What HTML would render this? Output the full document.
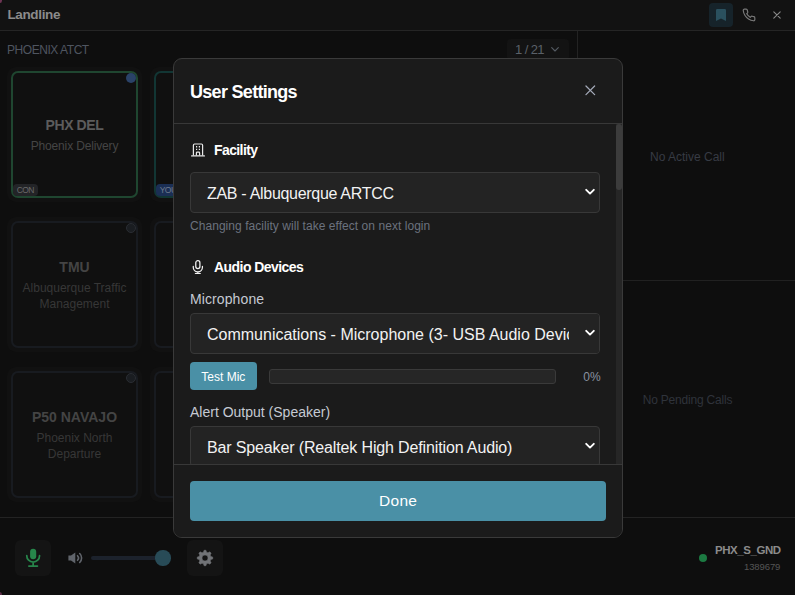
<!DOCTYPE html>
<html lang="en">
<head>
<meta charset="utf-8">
<title>Landline</title>
<style>
*{box-sizing:border-box;margin:0;padding:0}
html,body{width:795px;height:595px;overflow:hidden;background:#0e0e0e}
body{position:relative;font-family:"Liberation Sans","DejaVu Sans",sans-serif;color:#fff}
.abs{position:absolute}
.t{position:absolute;white-space:nowrap;line-height:1}
.b{font-weight:bold}
/* app chrome */
#hdr{left:0;top:0;width:795px;height:31px;background:#121212;border-bottom:1px solid #252525}
#rightp{left:577px;top:31px;width:1px;height:487px;background:#232323}
#rdiv{left:578px;top:280px;width:217px;height:1px;background:#212121}
#ftr{left:0;top:517px;width:795px;height:78px;background:#0e0e0e;border-top:1px solid #232323}
.wrap{position:absolute;width:135px;height:135px;border-radius:9px;background:#111}
.card{position:absolute;left:4px;top:4px;width:127px;height:127px;border-radius:7px;border:2px solid #181b20;background:#101010}
.ct{position:absolute;left:0;width:123px;text-align:center;white-space:nowrap;line-height:1}
.dot{position:absolute;width:10px;height:10px;border-radius:50%}
.badge{position:absolute;left:0;bottom:0;height:12px;border-radius:4px;font-size:8.500px;line-height:12px;padding:0 4px 0 3.800px;letter-spacing:-0.600px}
.ibtn{position:absolute;width:36px;height:36px;border-radius:6px;background:#141414}
/* modal */
#modal{left:173px;top:58px;width:450px;height:480px;border-radius:9px;background:#1b1b1b;border:1px solid #3a3a3a;overflow:hidden}
.sel{position:absolute;left:16px;width:410px;height:41px;border-radius:4px;background:#232323;border:1px solid #383838;overflow:hidden}
.sel .t{left:16px;top:13px;font-size:16px;color:#f2f2f2}
#s1{letter-spacing:-0.3px}#s3{letter-spacing:-0.14px}
.chev{position:absolute;left:393.750px;top:15.150px;width:10px;height:8px}
</style>
</head>
<body>
<!-- header -->
<div class="abs" style="left:-2px;top:-2px;width:4px;height:5px;border-radius:50%;background:#6e3554;z-index:5"></div>
<div class="abs" style="left:-2px;top:592px;width:4px;height:5px;border-radius:50%;background:#5a2c46;z-index:5"></div>
<div id="hdr" class="abs"></div>
<div id="title" class="t b" style="left:7.400px;top:8.200px;font-size:13.500px;letter-spacing:-0.350px;color:#8b8b8b">Landline</div>
<div class="abs" style="left:709px;top:3px;width:24px;height:24px;border-radius:4px;background:#16232a"></div>
<svg class="abs" style="left:716px;top:9px" width="10" height="12" viewBox="0 0 10 12"><path d="M0 1.2Q0 0 1.2 0H8.8Q10 0 10 1.2V12L5 9.500L0 12Z" fill="#2a505e"/></svg>
<svg class="abs" style="left:742px;top:8px" width="14" height="14" viewBox="0 0 24 24" fill="none" stroke="#7a7a7a" stroke-width="2" stroke-linecap="round" stroke-linejoin="round"><path d="M22 16.92v3a2 2 0 0 1-2.18 2 19.79 19.79 0 0 1-8.63-3.07 19.5 19.5 0 0 1-6-6 19.79 19.79 0 0 1-3.07-8.67A2 2 0 0 1 4.11 2h3a2 2 0 0 1 2 1.72 12.84 12.84 0 0 0 .7 2.81 2 2 0 0 1-.45 2.11L8.09 9.91a16 16 0 0 0 6 6l1.27-1.27a2 2 0 0 1 2.11-.45 12.84 12.84 0 0 0 2.81.7A2 2 0 0 1 22 16.92z"/></svg>
<svg class="abs" style="left:773px;top:11px" width="8" height="8" viewBox="0 0 8 8" stroke="#8a8a8a" stroke-width="1.1" stroke-linecap="round"><path d="M0.8 0.8L7.2 7.2M7.2 0.8L0.8 7.2"/></svg>

<!-- left panel -->
<div id="fac" class="t" style="left:7px;top:44px;font-size:12px;letter-spacing:-0.45px;color:#4f5560">PHOENIX ATCT</div>
<div class="abs" style="left:507px;top:39px;width:62px;height:22px;border-radius:4px;background:#131313"></div>
<div id="pg" class="t" style="left:515px;top:43px;font-size:13px;letter-spacing:-0.6px;color:#5a6068">1 / 21</div>
<svg class="abs" style="left:551px;top:47px" width="8" height="5" viewBox="0 0 8 5" fill="none" stroke="#555b63" stroke-width="1.100" stroke-linecap="round" stroke-linejoin="round"><path d="M0.700 0.700L4 4L7.300 0.700"/></svg>

<!-- cards -->
<div class="wrap" style="left:7px;top:67px"><div class="card" style="border-color:#1f4630">
  <div class="dot" style="right:0;top:0;background:#2a4268"></div>
  <div id="c1a" class="ct b" style="top:45px;font-size:14px;letter-spacing:-0.4px;color:#5c5c5c">PHX DEL</div>
  <div id="c1b" class="ct" style="top:67px;font-size:12px;letter-spacing:-0.15px;color:#454545">Phoenix Delivery</div>
  <div class="badge" style="background:#232427;color:#6a6a6a">CON</div>
</div></div>
<div class="wrap" style="left:150px;top:67px"><div class="card" style="border-color:#123634">
  <div class="badge" style="background:#1b2f55;color:#6f7a8c">YOU</div>
</div></div>
<div class="wrap" style="left:7px;top:217px"><div class="card">
  <div class="dot" style="right:0;top:0;background:#1a1d21;border:1px solid #2a2d33"></div>
  <div id="c2a" class="ct b" style="top:37px;font-size:14px;color:#444">TMU</div>
  <div id="c2b" class="ct" style="top:59px;font-size:12px;color:#373737">Albuquerque Traffic</div>
  <div id="c2c" class="ct" style="top:75px;font-size:12px;color:#373737">Management</div>
</div></div>
<div class="wrap" style="left:150px;top:217px"><div class="card"></div></div>
<div class="wrap" style="left:7px;top:367px"><div class="card">
  <div class="dot" style="right:0;top:0;background:#1a1d21;border:1px solid #2a2d33"></div>
  <div id="c3a" class="ct b" style="top:37px;font-size:14px;color:#444">P50 NAVAJO</div>
  <div id="c3b" class="ct" style="top:59px;font-size:12px;color:#373737">Phoenix North</div>
  <div id="c3c" class="ct" style="top:75px;font-size:12px;color:#373737">Departure</div>
</div></div>
<div class="wrap" style="left:150px;top:367px"><div class="card"></div></div>

<!-- right panel -->
<div id="rightp" class="abs"></div>
<div id="rdiv" class="abs"></div>
<div id="nac" class="t" style="left:650px;top:151px;font-size:12px;color:#373b44">No Active Call</div>
<div id="npc" class="t" style="left:642.700px;top:394px;font-size:12px;letter-spacing:-0.2px;color:#2f333b">No Pending Calls</div>

<!-- footer -->
<div id="ftr" class="abs"></div>
<div class="ibtn" style="left:15px;top:540px"></div>
<svg class="abs" style="left:24px;top:548px" width="18" height="20" viewBox="0 0 18 20"><rect x="6.100" y="0.800" width="6.100" height="10.500" rx="3.050" fill="#27864b"/><path d="M2.750 7.700a6.400 6.400 0 0 0 12.800 0M9.150 14.100v3.600M4.900 18h8.500" fill="none" stroke="#27864b" stroke-width="1.750" stroke-linecap="round"/></svg>
<svg class="abs" style="left:67.600px;top:551px" width="16" height="14" viewBox="0 0 16 14"><path d="M0.400 4.400H3L7.300 1.400V12.600L3 9.600H0.400Z" fill="#60646b"/><path d="M9.500 4.700a3.300 3.300 0 0 1 0 4.600M11.700 2.500a6.300 6.300 0 0 1 0 9" fill="none" stroke="#60646b" stroke-width="1.600" stroke-linecap="round"/></svg>
<div class="abs" style="left:91px;top:556px;width:74px;height:4px;border-radius:2px;background:#1c222c"></div>
<div class="abs" style="left:155.400px;top:550.400px;width:15.200px;height:15.200px;border-radius:50%;background:#284b57"></div>
<div class="ibtn" style="left:187px;top:540px"></div>
<svg class="abs" style="left:195px;top:547.900px" width="20" height="20" viewBox="0 0 20 20"><path fill="#717377" fill-rule="evenodd" stroke="#717377" stroke-width="0.500" stroke-linejoin="round" d="M15.80 8.45L17.74 9.05L17.74 10.95L15.80 11.55L15.20 13.00L16.15 14.80L14.80 16.15L13.00 15.20L11.55 15.80L10.95 17.74L9.05 17.74L8.45 15.80L7.00 15.20L5.20 16.15L3.85 14.80L4.80 13.00L4.20 11.55L2.26 10.95L2.26 9.05L4.20 8.45L4.80 7.00L3.85 5.20L5.20 3.85L7.00 4.80L8.45 4.20L9.05 2.26L10.95 2.26L11.55 4.20L13.00 4.80L14.80 3.85L16.15 5.20L15.20 7.00ZM7.00 10a3.00 3.00 0 1 0 6.00 0a3.00 3.00 0 1 0 -6.00 0Z"/></svg>
<div class="abs" style="left:699px;top:554px;width:8px;height:8px;border-radius:50%;background:#1c7a42"></div>
<div id="cs" class="t b" style="left:715px;top:545px;font-size:11.5px;letter-spacing:-0.45px;color:#8b8b8b">PHX_S_GND</div>
<div id="cid" class="t" style="left:744px;top:561.500px;font-size:9.500px;letter-spacing:-0.100px;color:#555">1389679</div>

<!-- modal -->
<div id="modal" class="abs">
  <div id="mt" class="t b" style="left:16px;top:24px;font-size:18px;letter-spacing:-0.7px;color:#fff">User Settings</div>
  <svg class="abs" style="left:411px;top:26.400px" width="10.600" height="10.600" viewBox="0 0 11 11" stroke="#a3a9b8" stroke-width="1.3" stroke-linecap="round"><path d="M1 1L10 10M10 1L1 10"/></svg>
  <div class="abs" style="left:0;top:64px;width:448px;height:1px;background:#383838"></div>
  <!-- scrollbar -->
  <div class="abs" style="left:442px;top:65px;width:6px;height:340px;background:#262626"></div>
  <div class="abs" style="left:442px;top:65px;width:6px;height:66px;border-radius:3px;background:#3c3c3c"></div>

  <svg class="abs" style="left:17px;top:84px" width="14" height="14" viewBox="0 0 14 14" fill="none" stroke="#e8e8e8" stroke-width="1.2"><path d="M2.4 12.6V2.2Q2.4 1 3.6 1H10.4Q11.600 1 11.6 2.2V12.600"/><path d="M0.600 12.900H13.400" stroke-linecap="round"/><path d="M5.400 12.600V10Q5.400 9.200 6.200 9.200H7.800Q8.600 9.200 8.600 10V12.600"/><path d="M5 3.800H6.200M7.800 3.800H9M5 6.400H6.200M7.800 6.400H9" stroke-width="1.4"/></svg>
  <div id="l1" class="t b" style="left:40px;top:84px;font-size:14px;letter-spacing:-0.6px;color:#fff">Facility</div>
  <div class="sel" style="top:113px"><div id="s1" class="t">ZAB - Albuquerque ARTCC</div>
    <svg class="chev" viewBox="0 0 10 8" fill="none" stroke="#fff" stroke-width="1.900" stroke-linecap="round" stroke-linejoin="round"><path d="M1.200 1.800L5 5.600L8.800 1.800"/></svg></div>
  <div id="h1" class="t" style="left:16px;top:161px;font-size:12px;letter-spacing:0.050px;color:#6b727e">Changing facility will take effect on next login</div>

  <svg class="abs" style="left:18.300px;top:201px" width="11.700" height="14.400" viewBox="0 0 13 16" fill="none" stroke="#f2f2f2" stroke-width="1.400" stroke-linecap="round"><rect x="4.200" y="0.800" width="4.600" height="8.800" rx="2.300"/><path d="M1.400 7.200v0.800a5.100 5.100 0 0 0 10.200 0V7.200M6.500 13.200v2M3.800 15.200h5.400"/></svg>
  <div id="l2" class="t b" style="left:40px;top:201px;font-size:14px;letter-spacing:-0.55px;color:#fff">Audio Devices</div>
  <div id="l3" class="t" style="left:16px;top:233px;font-size:14px;letter-spacing:0.1px;color:#c5cad3">Microphone</div>
  <div class="sel" style="top:254px"><div id="s2" class="t">Communications - Microphone (3- USB Audio Device)</div>
    <div class="abs" style="left:378px;top:0;width:31px;height:39px;background:#232323"></div>
    <svg class="chev" viewBox="0 0 10 8" fill="none" stroke="#fff" stroke-width="1.900" stroke-linecap="round" stroke-linejoin="round"><path d="M1.200 1.800L5 5.600L8.800 1.800"/></svg></div>

  <div class="abs" style="left:16px;top:303px;width:67px;height:28px;border-radius:4px;background:#4a90a6"></div>
  <div id="tm" class="t" style="left:27.300px;top:312px;font-size:12px;color:#fff">Test Mic</div>
  <div class="abs" style="left:95px;top:310px;width:287px;height:15px;border-radius:3px;background:#262626;border:1px solid #3a3a3a"></div>
  <div id="pc" class="t" style="left:409.300px;top:312px;font-size:12px;color:#8a92a0">0%</div>

  <div id="l4" class="t" style="left:16px;top:346px;font-size:14px;color:#c5cad3">Alert Output (Speaker)</div>
  <div class="sel" style="top:367px"><div id="s3" class="t">Bar Speaker (Realtek High Definition Audio)</div>
    <svg class="chev" viewBox="0 0 10 8" fill="none" stroke="#fff" stroke-width="1.900" stroke-linecap="round" stroke-linejoin="round"><path d="M1.200 1.800L5 5.600L8.800 1.800"/></svg></div>

  <!-- footer -->
  <div class="abs" style="left:0;top:405px;width:448px;height:73px;background:#1b1b1b;border-top:1px solid #383838"></div>
  <div class="abs" style="left:16px;top:422px;width:416px;height:40px;border-radius:4px;background:#4a90a6"></div>
  <div id="dn" class="t" style="left:205px;top:434px;font-size:15.5px;letter-spacing:0.3px;color:#fff">Done</div>
</div>
</body>
</html>
